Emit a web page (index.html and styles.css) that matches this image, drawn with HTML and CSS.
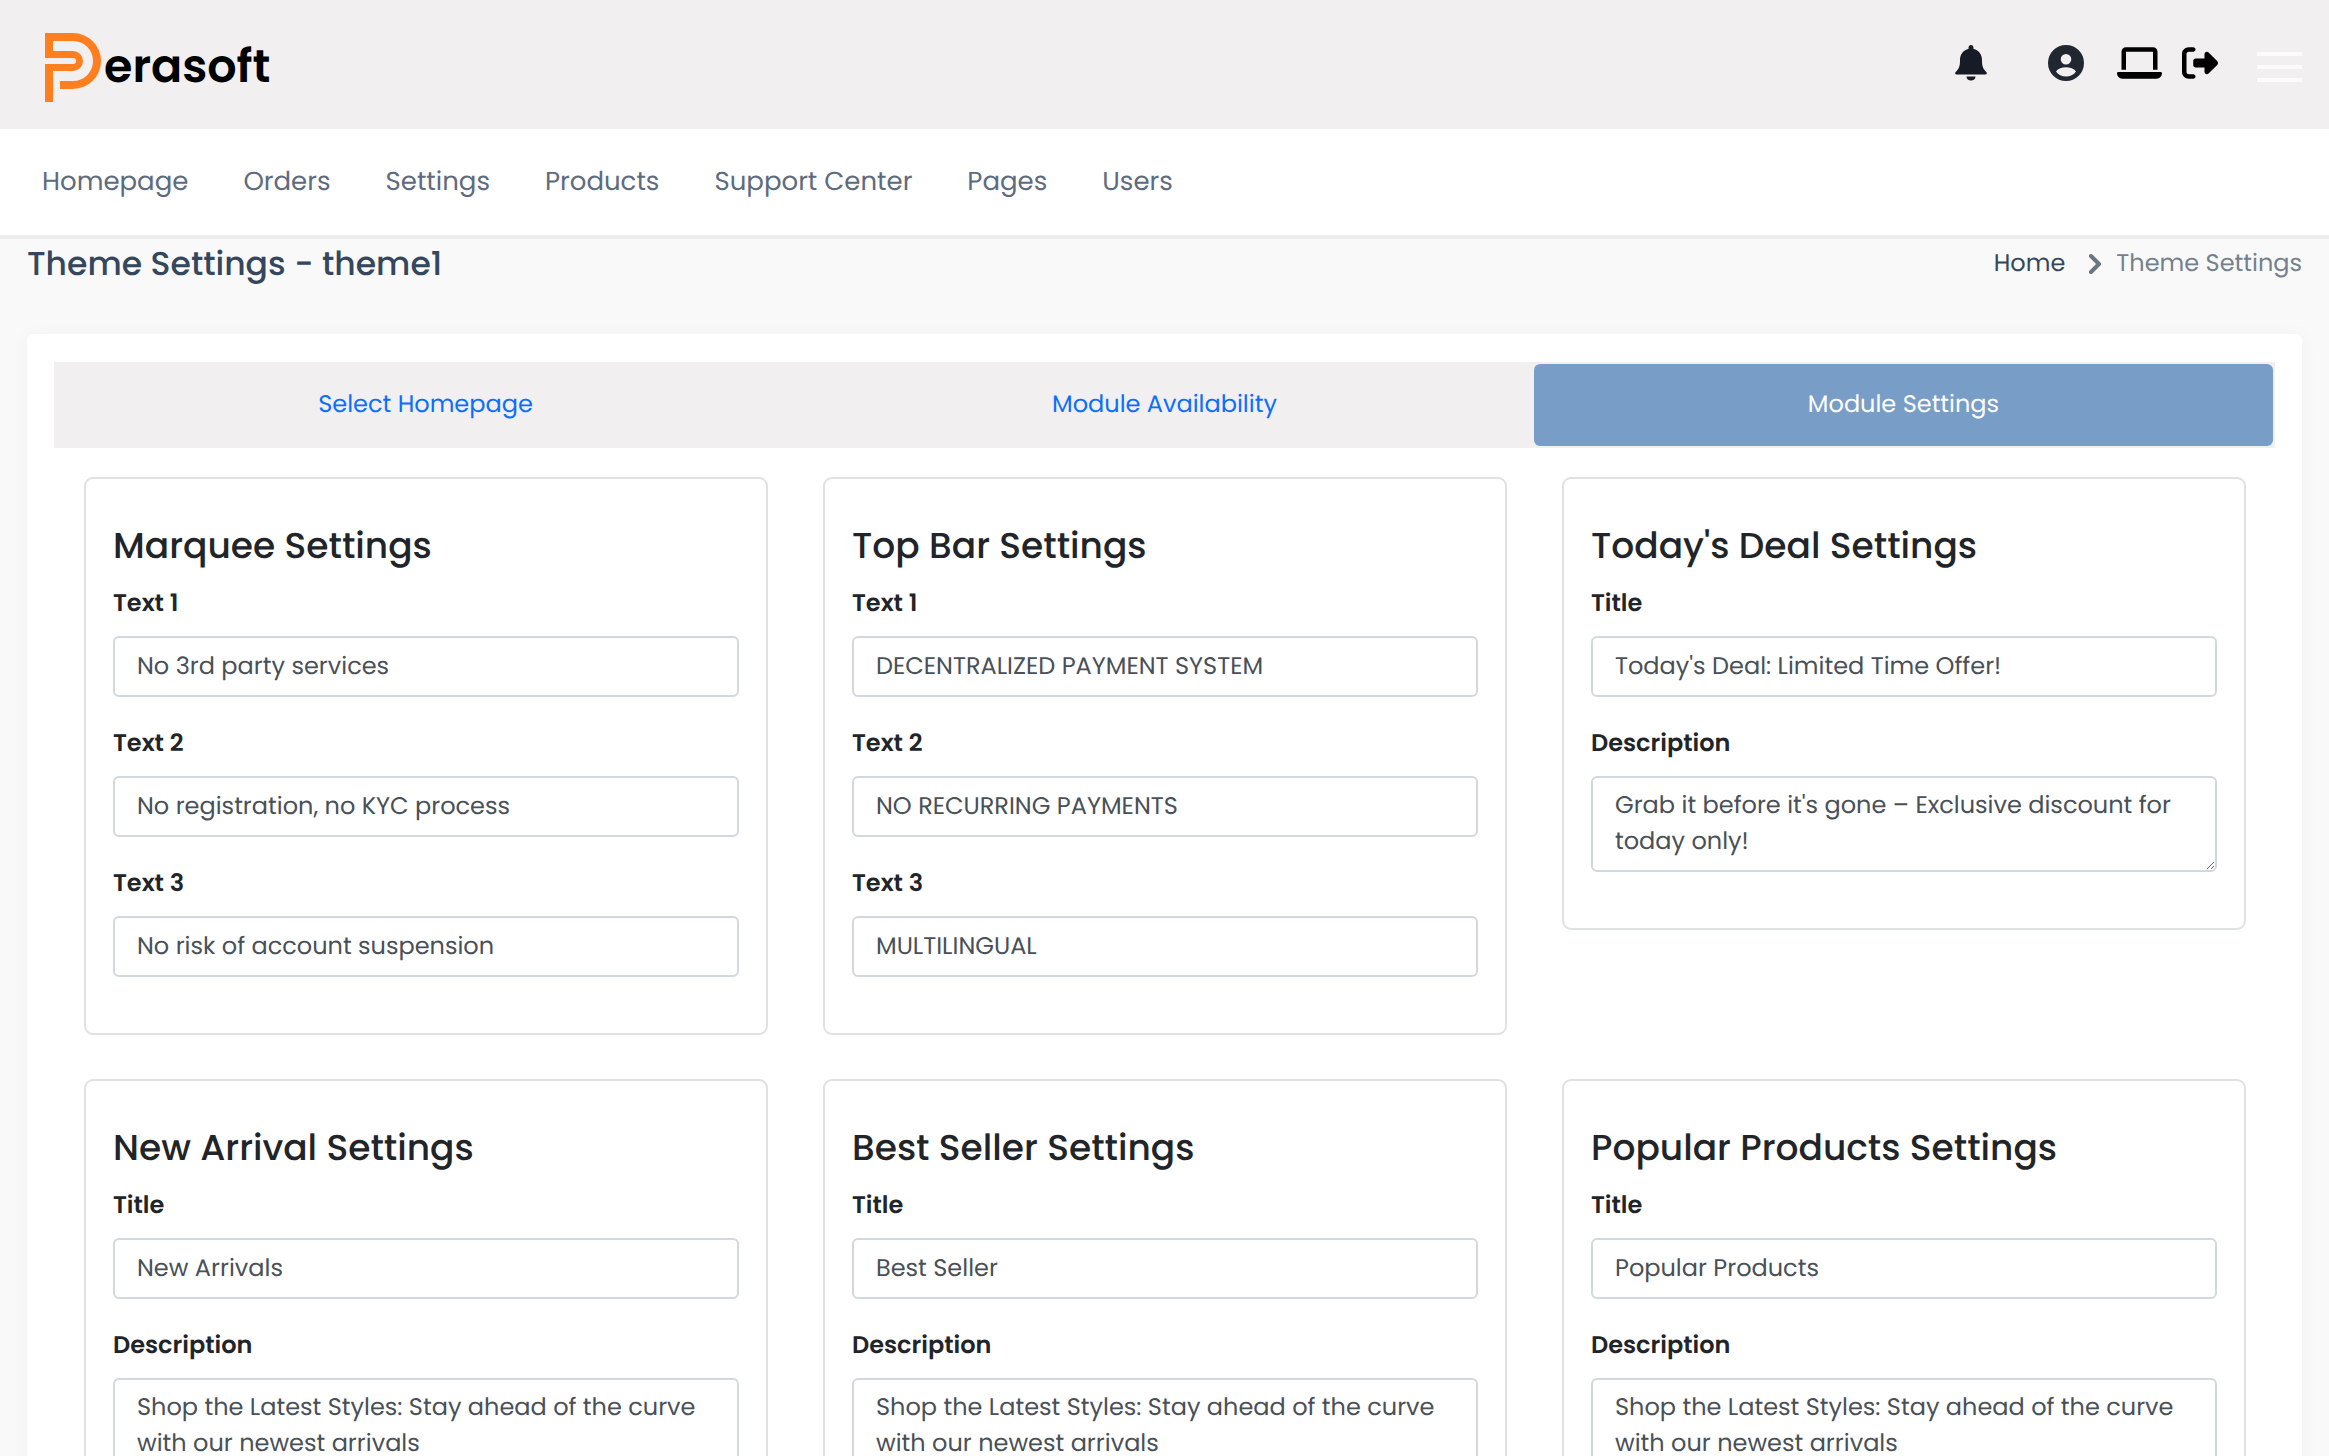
FILE: index.html
```html
<!DOCTYPE html>
<html lang="en">
<head>
  <meta charset="UTF-8" />
  <meta name="viewport" content="width=device-width, initial-scale=1.0"/>
  <title>Theme Settings - Perasoft</title>
  <link rel="stylesheet" href="styles.css">
</head>
<body>

<header class="topbar">
  <a href="#" class="logo" aria-label="Perasoft">
    <svg width="240" height="72" viewBox="44 32 240 72">
      <path fill="#ff7f1e" d="M45 33H73A28 28 0 0 1 73 89H60V81H73A20 20 0 0 0 73 41H53V51H73A10 10 0 0 1 73 71H53V102H45V64H73A3 3 0 0 0 73 58H45Z"/>
      <text x="104" y="82" class="logo-text">erasoft</text>
    </svg>
  </a>
  <div class="actions">
    <a href="#" class="bell" aria-label="Notifications">
      <svg width="32" height="36" viewBox="0 0 32 36"><path d="M16 0c-1.500 0-2.500 1.200-2.500 3v1C8 5.300 5 9.500 5 15c0 7-1.300 9-4.300 12C-.3 28.100.2 29.500 1.500 29.500h29c1.300 0 1.800-1.400.8-2.500C28.300 24 27 22 27 15c0-5.500-3-9.700-8.500-11V3c0-1.800-1-3-2.500-3zM11.500 31.500h9c0 2.500-2 4-4.500 4s-4.500-1.500-4.500-4z"/></svg>
    </a>
    <a href="#" class="user" aria-label="Account">
      <svg width="36" height="36" viewBox="0 0 36 36"><path fill-rule="evenodd" d="M18 0a18 18 0 1 0 0 36a18 18 0 1 0 0-36zM18 9a5.300 5.300 0 1 1 0 10.600a5.300 5.300 0 1 1 0-10.600zM8 26.500c2-2.800 6-4.200 10-4.200s8 1.400 10 4.200c-2.200 3.200-6 5-10 5s-7.800-1.800-10-5z"/></svg>
    </a>
    <a href="#" class="laptop" aria-label="View site">
      <svg width="45" height="36" viewBox="0 0 640 512"><path d="M128 32C92.700 32 64 60.700 64 96V352h64V96H512V352h64V96c0-35.300-28.700-64-64-64H128zM19.200 384C8.600 384 0 392.600 0 403.200C0 445.600 34.400 480 76.800 480H563.200c42.400 0 76.800-34.400 76.800-76.800c0-10.600-8.600-19.200-19.200-19.200H19.200z"/></svg>
    </a>
    <a href="#" class="logout" aria-label="Log out">
      <svg width="36" height="36" viewBox="0 0 512 512"><path d="M377.900 105.900L500.700 228.700c7.200 7.200 11.300 17.100 11.300 27.300s-4.100 20.100-11.300 27.300L377.900 406.100c-6.400 6.400-15 9.900-24 9.900c-18.700 0-33.900-15.200-33.900-33.900l0-62.100-128 0c-17.700 0-32-14.300-32-32l0-64c0-17.700 14.300-32 32-32l128 0 0-62.100c0-18.700 15.200-33.900 33.900-33.900c9 0 17.600 3.600 24 9.900zM160 96L96 96c-17.700 0-32 14.300-32 32l0 256c0 17.700 14.300 32 32 32l64 0c17.700 0 32 14.300 32 32s-14.300 32-32 32l-64 0c-53 0-96-43-96-96L0 128C0 75 43 32 96 32l64 0c17.700 0 32 14.300 32 32s-14.300 32-32 32z"/></svg>
    </a>
    <button type="button" class="menu-btn" aria-label="Menu"><span></span><span></span><span></span></button>
  </div>
</header>

<nav class="nav">
  <a href="#">Homepage</a>
  <a href="#">Orders</a>
  <a href="#">Settings</a>
  <a href="#">Products</a>
  <a href="#">Support Center</a>
  <a href="#">Pages</a>
  <a href="#">Users</a>
</nav>

<main>
  <div class="page-head">
    <h1>Theme Settings - theme1</h1>
    <div class="breadcrumb">
      <a href="#">Home</a>
      <svg width="12" height="20" viewBox="0 0 12 20"><path d="M2 2l8 8-8 8" fill="none" stroke="#6c757d" stroke-width="4" stroke-linecap="round" stroke-linejoin="round"/></svg>
      <span>Theme Settings</span>
    </div>
  </div>

  <div class="panel">
    <div class="tabs">
      <button type="button">Select Homepage</button>
      <button type="button">Module Availability</button>
      <button type="button" class="active">Module Settings</button>
    </div>

    <form class="grid">
      <section class="card">
        <h2>Marquee Settings</h2>
        <label for="marquee1">Text 1</label>
        <input type="text" id="marquee1" value="No 3rd party services">
        <label for="marquee2">Text 2</label>
        <input type="text" id="marquee2" value="No registration, no KYC process">
        <label for="marquee3">Text 3</label>
        <input type="text" id="marquee3" value="No risk of account suspension">
      </section>

      <section class="card">
        <h2>Top Bar Settings</h2>
        <label for="topbar1">Text 1</label>
        <input type="text" id="topbar1" value="DECENTRALIZED PAYMENT SYSTEM">
        <label for="topbar2">Text 2</label>
        <input type="text" id="topbar2" value="NO RECURRING PAYMENTS">
        <label for="topbar3">Text 3</label>
        <input type="text" id="topbar3" value="MULTILINGUAL">
      </section>

      <section class="card">
        <h2>Today's Deal Settings</h2>
        <label for="deal-title">Title</label>
        <input type="text" id="deal-title" value="Today's Deal: Limited Time Offer!">
        <label for="deal-desc">Description</label>
        <textarea id="deal-desc" rows="2">Grab it before it's gone – Exclusive discount for today only!</textarea>
      </section>

      <section class="card">
        <h2>New Arrival Settings</h2>
        <label for="new-title">Title</label>
        <input type="text" id="new-title" value="New Arrivals">
        <label for="new-desc">Description</label>
        <textarea id="new-desc" rows="2">Shop the Latest Styles: Stay ahead of the curve with our newest arrivals</textarea>
      </section>

      <section class="card">
        <h2>Best Seller Settings</h2>
        <label for="best-title">Title</label>
        <input type="text" id="best-title" value="Best Seller">
        <label for="best-desc">Description</label>
        <textarea id="best-desc" rows="2">Shop the Latest Styles: Stay ahead of the curve with our newest arrivals</textarea>
      </section>

      <section class="card">
        <h2>Popular Products Settings</h2>
        <label for="popular-title">Title</label>
        <input type="text" id="popular-title" value="Popular Products">
        <label for="popular-desc">Description</label>
        <textarea id="popular-desc" rows="2">Shop the Latest Styles: Stay ahead of the curve with our newest arrivals</textarea>
      </section>
    </form>
  </div>
</main>

</body>
</html>
```
FILE: styles.css
```css
* { margin: 0; padding: 0; box-sizing: border-box; }
html {
  scrollbar-width: none;
}
body {
  font-family: Poppins, Inter, sans-serif;
  font-size: 24px;
  line-height: 36px;
  text-rendering: geometricPrecision;
  background: #f9f9f9;
  color: #212529;
}
a {
  text-decoration: none;
  color: inherit;
}
svg {
  display: block;
  overflow: visible;
}

/* top bar */
.topbar {
  display: flex;
  justify-content: space-between;
  align-items: center;
  height: 129px;
  padding: 0 27px 0 44px;
  background: #f1eff0;
}
.logo {
  margin-top: 6px;
}
.logo-text {
  font-size: 46px;
  font-weight: 600;
}
.actions {
  display: flex;
  align-items: center;
}
.actions a {
  margin-bottom: 4px;
}
.bell {
  margin-right: 61px;
  fill: #161b25;
}
.user {
  margin-right: 33px;
  fill: #212731;
}
.laptop {
  margin-right: 20px;
}
.logout {
  margin-right: 39px;
}
.menu-btn {
  display: flex;
  flex-direction: column;
  gap: 9px;
  width: 45px;
  margin-top: 4px;
  border: none;
  background: none;
  cursor: pointer;
}
.menu-btn span {
  height: 4px;
  background: #fbfbfb;
}

/* main menu */
.nav {
  display: flex;
  align-items: center;
  gap: 55px;
  height: 110px;
  padding: 0 42px;
  background: #fff;
  border-bottom: 4px solid #ececec;
  font-size: 26px;
  color: #5e6b7e;
}

main {
  padding: 0 27px 27px;
}
.page-head {
  display: flex;
  justify-content: space-between;
  align-items: center;
  height: 50px;
  margin-bottom: 45px;
}
.page-head h1 {
  font-size: 33px;
  font-weight: 500;
  color: #34475d;
}
.breadcrumb {
  display: flex;
  align-items: center;
  color: #74808d;
}
.breadcrumb a {
  color: #34475d;
}
.breadcrumb svg {
  margin: 0 15px 0 24px;
}

.panel {
  padding: 28px 27px;
  background: #fff;
  border-radius: 6px;
  box-shadow: 0 0 20px rgba(0,0,0,0.03);
}
.tabs {
  display: grid;
  grid-template-columns: repeat(3, 1fr);
  height: 86px;
  padding: 2px;
  background: #f1eff0;
}
.tabs button {
  border: none;
  border-radius: 6px;
  background: none;
  font: inherit;
  color: #0d6efd;
  text-rendering: inherit;
  cursor: pointer;
}
.tabs .active {
  background: #789dc7;
  color: #fff;
}

.grid {
  display: grid;
  grid-template-columns: repeat(3, 1fr);
  align-items: start;
  gap: 44px 55px;
  padding: 29px 29px 29px 30px;
}
.card {
  padding: 45px 27px 28px;
  border: 2px solid #dfe1e3;
  border-radius: 9px;
}
.card h2 {
  margin-bottom: 18px;
  font-size: 36px;
  font-weight: 500;
  line-height: 44px;
}
.card label {
  display: block;
  margin-bottom: 14px;
  font-weight: 600;
}
.card input,
.card textarea {
  display: block;
  width: 100%;
  margin-bottom: 29px;
  padding: 10px 22px;
  border: 2px solid #d2d8de;
  border-radius: 6px;
  background: #fff;
  font: inherit;
  color: #495057;
  text-rendering: inherit;
}
.card input {
  height: 61px;
}
.card > :last-child {
  margin-bottom: 28px;
}
```
